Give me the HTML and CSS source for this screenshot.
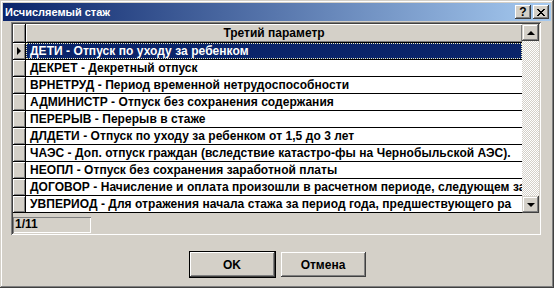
FILE: index.html
```html
<!DOCTYPE html>
<html lang="ru">
<head>
    <meta charset="UTF-8">
    <title>Исчисляемый стаж</title>
    <link rel="stylesheet" href="styles.css">
</head>
<body>
    <div class="window">
        <div class="titlebar">
            <span class="title">Исчисляемый стаж</span>
            <div class="tbtns">
                <span class="tbtn">?</span>
                <span class="tbtn close">
                    <svg width="8" height="7" viewBox="0 0 8 7"><path d="M0 0h2v1h1v1h2v-1h1v-1h2v1h-1v1h-1v1h-1v1h1v1h1v1h1v1h-2v-1h-1v-1h-2v1h-1v1h-2v-1h1v-1h1v-1h1v-1h-1v-1h-1v-1h-1z" fill="#000"/></svg>
                </span>
            </div>
        </div>

        <div class="panel">
            <div class="gridwrap">
                <div class="table">
                    <div class="hdr">
                        <div class="ind"></div>
                        <div class="hcell">Третий параметр</div>
                    </div>
                    <div class="row selected">
                        <div class="ind"><span class="arrow"></span></div>
                        <div class="cell">ДЕТИ - Отпуск по уходу за ребенком</div>
                    </div>
                    <div class="row">
                        <div class="ind"></div>
                        <div class="cell">ДЕКРЕТ - Декретный отпуск</div>
                    </div>
                    <div class="row">
                        <div class="ind"></div>
                        <div class="cell">ВРНЕТРУД - Период временной нетрудоспособности</div>
                    </div>
                    <div class="row">
                        <div class="ind"></div>
                        <div class="cell">АДМИНИСТР - Отпуск без сохранения содержания</div>
                    </div>
                    <div class="row">
                        <div class="ind"></div>
                        <div class="cell">ПЕРЕРЫВ - Перерыв в стаже</div>
                    </div>
                    <div class="row">
                        <div class="ind"></div>
                        <div class="cell">ДЛДЕТИ - Отпуск по уходу за ребенком от 1,5 до 3 лет</div>
                    </div>
                    <div class="row">
                        <div class="ind"></div>
                        <div class="cell">ЧАЭС - Доп. отпуск граждан (вследствие катастро-фы на Чернобыльской АЭС).</div>
                    </div>
                    <div class="row">
                        <div class="ind"></div>
                        <div class="cell">НЕОПЛ - Отпуск без сохранения заработной платы</div>
                    </div>
                    <div class="row">
                        <div class="ind"></div>
                        <div class="cell">ДОГОВОР - Начисление и оплата произошли в расчетном периоде, следующем за</div>
                    </div>
                    <div class="row">
                        <div class="ind"></div>
                        <div class="cell">УВПЕРИОД - Для отражения начала стажа за период года, предшествующего ра</div>
                    </div>
                </div>
                <div class="vscroll">
                    <div class="sbtn"><span class="tri up"></span></div>
                    <div class="track"></div>
                    <div class="sbtn"><span class="tri down"></span></div>
                </div>
            </div>
            <div class="status">
                <div class="counter">1/11</div>
            </div>
        </div>

        <div class="buttons">
            <button class="btn default">OK</button>
            <button class="btn">Отмена</button>
        </div>
    </div>
</body>
</html>
```

FILE: styles.css
```css
body { margin: 0; background: #d4d0c8; font-family: "Liberation Sans", Arial, sans-serif; }

.window { width: 554px; height: 288px; box-sizing: border-box; padding: 3px; background: #d4d0c8;
    box-shadow: inset -1px -1px #404040, inset 1px 1px #d4d0c8, inset -2px -2px #808080, inset 2px 2px #fff; }

.titlebar { height: 18px; display: flex; align-items: center; justify-content: space-between;
    background: linear-gradient(to right, #0a246a, #a6caf0); padding: 0 2px 0 2px; }
.title { color: #fff; font-weight: bold; font-size: 11px; }
.tbtns { display: flex; gap: 2px; }
.tbtn { width: 16px; height: 14px; box-sizing: border-box; background: #d4d0c8; display: flex; align-items: center;
    justify-content: center; font-weight: bold; font-size: 12px; line-height: 14px; color: #000;
    box-shadow: inset -1px -1px #404040, inset 1px 1px #fff, inset -2px -2px #808080; }

.panel { margin: 1px 0 0 8px; width: 530px; box-sizing: border-box; padding: 2px;
    box-shadow: inset 1px 1px #808080, inset -1px -1px #fff, inset 2px 2px #404040, inset -2px -2px #d4d0c8; }

.gridwrap { display: flex; }
.table { width: 509px; }

.hdr, .row { display: flex; border-bottom: 1px solid #000; }
.hdr { height: 18px; }
.row { height: 16px; background: #fff; }

.ind { width: 12px; flex: none; border-right: 1px solid #000; background: #d4d0c8; position: relative;
    box-shadow: inset 1px 1px #fff, inset -1px -1px #808080; }

.hcell { flex: 1; background: #d4d0c8; font-weight: bold; font-size: 12px; text-align: center; line-height: 18px;
    box-shadow: inset 1px 1px #fff, inset -1px -1px #808080; }

.cell { flex: 1; min-width: 0; font-weight: bold; font-size: 12px; line-height: 16px; padding-left: 4px;
    letter-spacing: 0.05px; white-space: nowrap; overflow: hidden; color: #000; }
.row.selected .cell { background: #0a246a; color: #fff; outline: 1px dotted #f0f0c0; outline-offset: -1px; }

.arrow { position: absolute; left: 4px; top: 4px; width: 0; height: 0;
    border-top: 4px solid transparent; border-bottom: 4px solid transparent; border-left: 4px solid #000; }

.vscroll { width: 17px; display: flex; flex-direction: column; }
.sbtn { height: 17px; background: #d4d0c8; display: flex; align-items: center; justify-content: center;
    box-shadow: inset -1px -1px #404040, inset 1px 1px #d4d0c8, inset -2px -2px #808080, inset 2px 2px #fff; }
.track { flex: 1; background: repeating-conic-gradient(#fff 0 25%, #d4d0c8 0 50%) 0 0 / 2px 2px; }
.tri { width: 0; height: 0; border-left: 4px solid transparent; border-right: 4px solid transparent; }
.tri.up { border-bottom: 4px solid #000; }
.tri.down { border-top: 4px solid #000; }

.status { padding-top: 4px; height: 16px; }
.counter { width: 78px; height: 16px; box-sizing: border-box; font-weight: bold; font-size: 12px; line-height: 14px;
    padding-left: 2px; box-shadow: inset 1px 1px #808080, inset -1px -1px #fff; }

.buttons { display: flex; justify-content: center; align-items: center; gap: 5px; margin-top: 16px; }
.btn { width: 85px; height: 25px; background: #d4d0c8; border: none; font-family: "Liberation Sans", Arial, sans-serif;
    font-weight: bold; font-size: 12px; color: #000; padding: 0;
    box-shadow: inset -1px -1px #404040, inset 1px 1px #fff, inset -2px -2px #808080, inset 2px 2px #d4d0c8; }
.btn.default { width: 87px; height: 27px; border: 1px solid #000;
    box-shadow: inset -1px -1px #404040, inset 1px 1px #fff, inset -2px -2px #808080; }
```
